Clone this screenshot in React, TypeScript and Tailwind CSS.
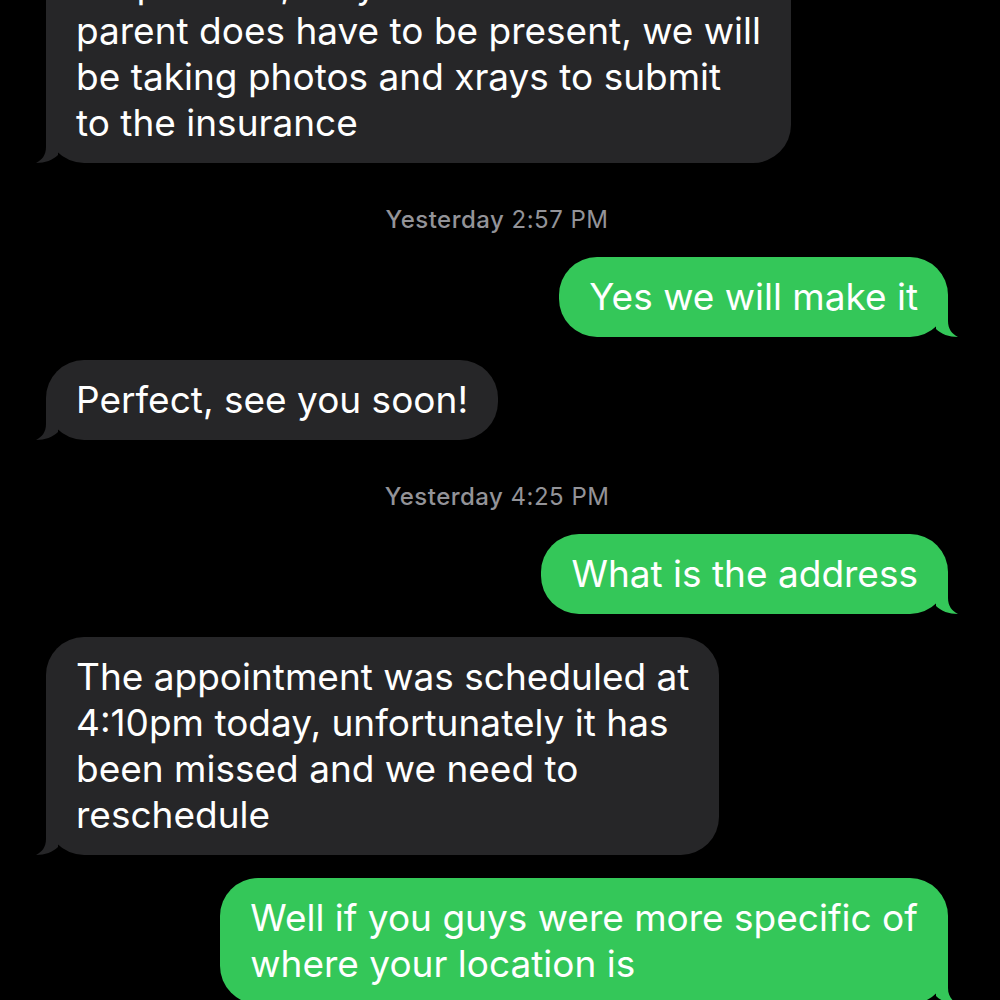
import React from 'react';

type Side = 'in' | 'out';

const Tail: React.FC<{ side: Side }> = ({ side }) => {
    const fill = side === 'in' ? '#262628' : '#34c759';
    return (
        <svg
            width="40"
            height="40"
            viewBox="0 0 40 40"
            className={side === 'in' ? 'absolute -left-[10px] bottom-0' : 'absolute -right-[10px] bottom-0 -scale-x-100'}
        >
            <path d="M10,0 L10,24 C10,32 6,37 0,40 C9,40 17,37 22,32 L22,0 Z" fill={fill} />
        </svg>
    );
};

const Bubble: React.FC<{ side: Side; lines: string[] }> = ({ side, lines }) => (
    <div
        className={
            'relative rounded-[38px] px-[30px] py-[17px] text-[37px] leading-[46px] text-white whitespace-nowrap ' +
            (side === 'in' ? 'self-start bg-[#262628]' : 'self-end bg-[#34c759]')
        }
    >
        <Tail side={side} />
        <div className="relative">
            {lines.map((l, i) => (
                <div key={i}>{l}</div>
            ))}
        </div>
    </div>
);

const Stamp: React.FC<{ time: string }> = ({ time }) => (
    <div className="self-center mt-[20px] text-[24px] leading-[28px] tracking-[0.02em] text-[#939398]">
        <span className="font-medium">Yesterday</span> <span>{time}</span>
    </div>
);

export default function App() {
    return (
        <div className="h-[1000px] w-[1000px] overflow-hidden bg-black" style={{ fontFamily: 'Inter, "Noto Sans", sans-serif' }}>
            <div className="flex flex-col gap-[23px] pl-[46px] pr-[52px] -mt-[55px]">
                <Bubble
                    side="in"
                    lines={[
                        'No problem, they do not but a',
                        'parent does have to be present, we will',
                        'be taking photos and xrays to submit',
                        'to the insurance',
                    ]}
                />
                <Stamp time="2:57 PM" />
                <Bubble side="out" lines={['Yes we will make it']} />
                <Bubble side="in" lines={['Perfect, see you soon!']} />
                <Stamp time="4:25 PM" />
                <Bubble side="out" lines={['What is the address']} />
                <Bubble
                    side="in"
                    lines={[
                        'The appointment was scheduled at',
                        '4:10pm today, unfortunately it has',
                        'been missed and we need to',
                        'reschedule',
                    ]}
                />
                <Bubble side="out" lines={['Well if you guys were more specific of', 'where your location is']} />
            </div>
        </div>
    );
}
